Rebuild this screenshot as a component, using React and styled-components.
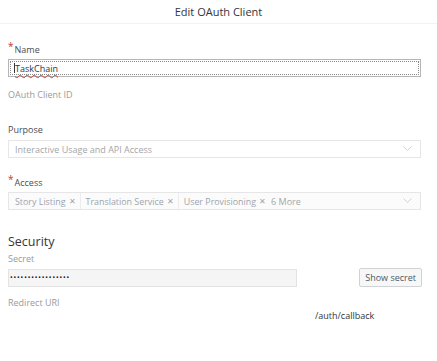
import React from 'react';
import styled, { createGlobalStyle } from 'styled-components';

const Global = createGlobalStyle`
  html, body { margin: 0; padding: 0; background: #fff; }
  body { font-family: "Open Sans", "Liberation Sans", sans-serif; color: #32363a; }
`;

const Dialog = styled.div`
  width: 437px;
  height: 361px;
  background: #fff;
  display: flex;
  flex-direction: column;
`;

const Header = styled.div`
  height: 23px;
  display: flex;
  align-items: center;
  justify-content: center;
  font-size: 11px;
  color: #32363a;
  border-bottom: 1px solid #f2f2f2;
`;

const Form = styled.div`
  padding: 0 16px 0 8px;
  display: flex;
  flex-direction: column;
`;

const Label = styled.div`
  font-size: 9px;
  line-height: 12px;
  color: ${p => (p.$muted ? '#9a9a9a' : '#4a4d50')};
  margin-top: ${p => p.$top}px;
  height: 12px;
`;

const Star = styled.span`
  color: #c0392b;
  font-size: 10px;
  position: relative;
  top: -3px;
  margin-right: 1px;
`;

const Input = styled.div`
  margin-top: 4px;
  height: 18px;
  box-sizing: border-box;
  border: 1px solid #b5b5b5;
  outline: 1px dotted #8a8a8a;
  outline-offset: -3px;
  display: flex;
  align-items: center;
  padding-left: 5px;
  font-size: 9px;
  color: #32363a;
`;

const Caret = styled.span`
  width: 1px;
  height: 10px;
  background: #32363a;
`;

const Spell = styled.span`
  text-decoration: underline wavy #d33;
  text-decoration-thickness: 1px;
  text-underline-offset: 2px;
`;

const Select = styled.div`
  margin-top: 4px;
  height: 18px;
  box-sizing: border-box;
  border: 1px solid #e6e6e6;
  background: ${p => (p.$shade ? '#fbfbfb' : '#fff')};
  display: flex;
  align-items: center;
  padding: 0 8px 0 6px;
  font-size: 9px;
  color: #a4a6a8;
  gap: 5px;
`;

const Token = styled.span`
  display: flex;
  align-items: center;
  gap: 3px;
  padding-right: ${p => (p.$last ? 0 : 4)}px;
  border-right: ${p => (p.$last ? 'none' : '1px solid #ececec')};
  height: 16px;
  color: #9ea4ad;
  font-size: 8.9px;
`;

const Close = styled.span`
  font-size: 7.5px;
`;

const Chevron = styled.svg`
  margin-left: auto;
  width: 9px;
  height: 6px;
`;

const Heading = styled.div`
  margin-top: 24px;
  font-size: 12.5px;
  line-height: 16px;
  color: #32363a;
`;

const SecretRow = styled.div`
  margin-top: 3px;
  display: flex;
  align-items: center;
  justify-content: space-between;
`;

const SecretField = styled.div`
  width: 289px;
  height: 18px;
  box-sizing: border-box;
  border: 1px solid #e3e3e3;
  background: #f5f5f5;
  display: flex;
  align-items: center;
  padding-left: 1px;
  font-size: 7px;
  letter-spacing: 0.9px;
  color: #111;
`;

const Button = styled.button`
  height: 19px;
  padding: 0 5px;
  border: 1px solid #cfd3d6;
  border-radius: 2px;
  background: #f7f7f7;
  font-family: inherit;
  font-size: 9px;
  color: #4a5a6a;
  margin-right: -1px;
`;

const Uri = styled.div`
  margin-left: 307px;
  margin-top: 1px;
  font-size: 9px;
  line-height: 12px;
  color: #32363a;
`;

const ChevronIcon = () => (
  <Chevron viewBox="0 0 9 6">
    <path d="M0.5 0.5 L4.5 4.5 L8.5 0.5" fill="none" stroke="#c4c6c8" strokeWidth="0.8" />
  </Chevron>
);

const tokens = ['Story Listing', 'Translation Service', 'User Provisioning'];

export default function App() {
  return (
    <Dialog>
      <Global />
      <Header>Edit OAuth Client</Header>
      <Form>
        <Label $top={19}><Star>*</Star>Name</Label>
        <Input><Caret /><Spell>TaskChain</Spell></Input>
        <Label $top={12} $muted>OAuth Client ID</Label>
        <Label $top={23}>Purpose</Label>
        <Select>
          Interactive Usage and API Access
          <ChevronIcon />
        </Select>
        <Label $top={18}><Star>*</Star>Access</Label>
        <Select $shade>
          {tokens.map((t, i) => (
            <Token key={t} $last={i === tokens.length - 1}>{t}<Close>✕</Close></Token>
          ))}
          <span>6 More</span>
          <ChevronIcon />
        </Select>
        <Heading>Security</Heading>
        <Label $top={3} $muted>Secret</Label>
        <SecretRow>
          <SecretField>•••••••••••••••••</SecretField>
          <Button>Show secret</Button>
        </SecretRow>
        <Label $top={10} $muted>Redirect URI</Label>
        <Uri>/auth/callback</Uri>
      </Form>
    </Dialog>
  );
}
